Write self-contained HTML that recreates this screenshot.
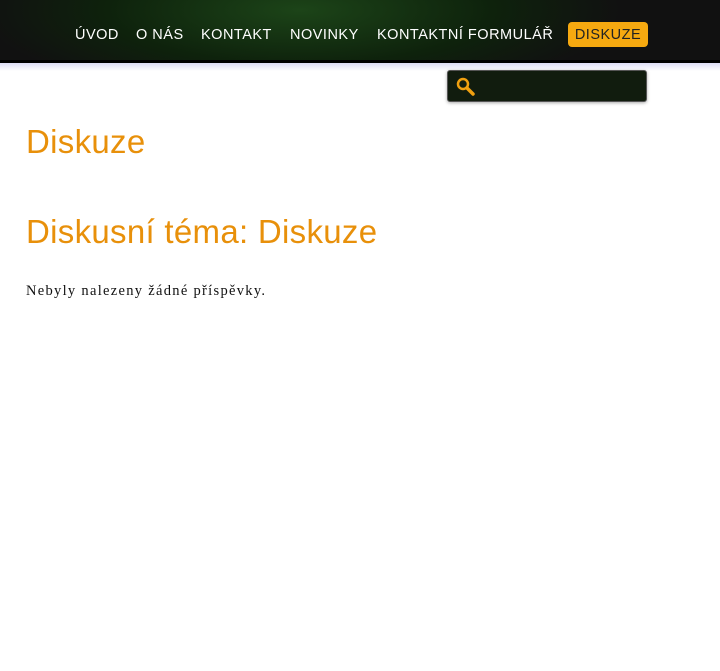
<!DOCTYPE html>
<html><head><meta charset="utf-8"><style>
body{margin:0;width:720px;height:671px;background:#fff;overflow:hidden;font-family:"Liberation Sans",sans-serif;position:relative}
.hdr{position:absolute;left:0;top:0;width:720px;height:60px;background:radial-gradient(ellipse 320px 90px at 300px 10px,#1c4418,#0e220c 60%,#111 100%);border-bottom:3px solid #000}
.band{position:absolute;left:0;top:63px;width:720px;height:8px;background:linear-gradient(#dcdcf4,#fff)}
.nav{position:absolute;top:27px;font-size:14.5px;color:#fff;letter-spacing:.5px}
.act{position:absolute;left:568px;top:22px;width:80px;height:25px;background:#f6a910;border-radius:4px;color:#222;font-size:14.5px;line-height:26px;text-align:center;letter-spacing:.5px}
.srch{position:absolute;left:447px;top:70px;width:198px;height:30px;background:#111c0e;border:1px solid #555;border-radius:3px;box-shadow:0 1px 3px #aaa}
h1{position:absolute;left:26px;margin:0;font-weight:normal;color:#e8900a;font-size:33px;letter-spacing:.3px}
p{position:absolute;left:26px;top:283px;margin:0;font-family:"Liberation Serif",serif;font-size:14.5px;color:#111;letter-spacing:1.3px}
</style></head><body>
<div class="hdr"></div><div class="band"></div>
<div class="nav" style="left:75px">ÚVOD</div>
<div class="nav" style="left:136px">O NÁS</div>
<div class="nav" style="left:201px">KONTAKT</div>
<div class="nav" style="left:290px">NOVINKY</div>
<div class="nav" style="left:377px">KONTAKTNÍ FORMULÁŘ</div>
<div class="act">DISKUZE</div>
<div class="srch"><svg width="24" height="24" style="position:absolute;left:7px;top:4px" viewBox="0 0 24 24"><circle cx="8" cy="9" r="5" fill="none" stroke="#f0a010" stroke-width="2.5"/><path d="M12 13l6 6" stroke="#f0a010" stroke-width="3.5" stroke-linecap="round"/></svg></div>
<h1 style="top:123px">Diskuze</h1>
<h1 style="top:213px">Diskusní téma: Diskuze</h1>
<p>Nebyly nalezeny žádné příspěvky.</p>
</body></html>
